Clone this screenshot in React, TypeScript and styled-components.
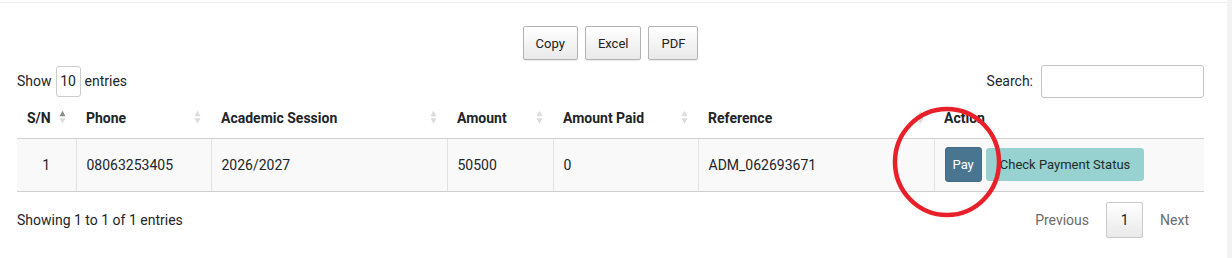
import React from "react";
import styled, { createGlobalStyle } from "styled-components";

const GlobalStyle = createGlobalStyle`
  html, body { margin: 0; padding: 0; background: #fff; }
  body { font-family: Roboto, "Liberation Sans", Arial, sans-serif; color: #212529; }
  * { box-sizing: border-box; }
`;

const Page = styled.div`
  width: 1232px;
  height: 258px;
  padding-top: 2px;
  border-right: 5px solid #f2f3f5;
  position: relative;
  overflow: hidden;
`;

const Card = styled.div`
  background: #fff;
  height: 256px;
  border-top: 1px solid #efefef;
  padding: 23px 23px 0 17px;
  display: flex;
  flex-direction: column;
`;

const Toolbar = styled.div`
  display: flex;
  justify-content: center;
  gap: 7px;
  height: 34px;
`;

const ExportButton = styled.button`
  height: 34px;
  padding: 0 12px;
  font-family: Roboto, "Liberation Sans", Arial, sans-serif;
  font-size: 13px;
  color: #222;
  border: 1px solid #b3b3b3;
  border-radius: 2px;
  background: linear-gradient(to bottom, #ffffff 0%, #e9e9e9 100%);
  box-shadow: 0 1px 1px rgba(0,0,0,0.08);
`;

const Controls = styled.div`
  display: flex;
  justify-content: space-between;
  align-items: center;
  margin-top: 5px;
  height: 32px;
  font-size: 14px;
`;

const Label = styled.label`
  display: flex;
  align-items: center;
  gap: 4px;
`;

const LengthBox = styled.span`
  display: inline-flex;
  align-items: center;
  justify-content: center;
  width: 25px;
  height: 31px;
  border: 1px solid #ccc;
  border-radius: 3px;
`;

const SearchBox = styled.span`
  display: inline-block;
  width: 163px;
  height: 33px;
  border: 1px solid #c4c4c4;
  border-radius: 3px;
  margin-left: 4px;
`;

const Table = styled.table`
  border-collapse: collapse;
  table-layout: fixed;
  width: 1187px;
  margin-top: 2px;
  font-size: 14px;
`;

const Th = styled.th<{ $w: number }>`
  width: ${(p) => p.$w}px;
  height: 39px;
  text-align: left;
  font-weight: 700;
  padding: 0 10px;
  position: relative;
  border-bottom: 1px solid #cfcfcf;
`;

const Td = styled.td<{ $center?: boolean }>`
  height: 53px;
  padding: 0 10px;
  background: #f9f9f9;
  border-left: 1px solid #e2e2e2;
  border-bottom: 1px solid #cfcfcf;
  text-align: ${(p) => (p.$center ? "center" : "left")};
  &:first-child { border-left: none; }
`;

const SortMark = styled.span`
  position: absolute;
  right: 10px;
  top: 50%;
  transform: translateY(-55%);
  display: flex;
`;

const Actions = styled.div`
  display: flex;
  gap: 4px;
  align-items: center;
`;

const PayButton = styled.button`
  height: 35px;
  padding: 0 7px;
  background: #4a7591;
  color: #fff;
  border: 1px solid #416a84;
  border-radius: 3px;
  font-family: Roboto, "Liberation Sans", Arial, sans-serif;
  font-size: 13px;
`;

const StatusButton = styled.button`
  height: 33px;
  padding: 0 13px;
  background: #97d2d0;
  color: #1d2b2b;
  border: 1px solid #97d2d0;
  border-radius: 3px;
  font-family: Roboto, "Liberation Sans", Arial, sans-serif;
  font-size: 13px;
`;

const Footer = styled.div`
  display: flex;
  justify-content: space-between;
  align-items: center;
  margin-top: 10px;
  font-size: 14px;
`;

const Pager = styled.div`
  display: flex;
  align-items: center;
  margin-right: -2px;
`;

const PageLink = styled.span`
  color: #6b6b6b;
  padding: 0 17px;
`;

const PageCurrent = styled.span`
  display: inline-flex;
  align-items: center;
  justify-content: center;
  width: 37px;
  height: 36px;
  border: 1px solid #c9c9c9;
  border-radius: 2px;
  background: linear-gradient(to bottom, #ffffff 0%, #e9e9e9 100%);
  color: #222;
`;

const Annotation = styled.svg`
  position: absolute;
  left: 890px;
  top: 104px;
  pointer-events: none;
`;

const Sort: React.FC<{ active?: boolean }> = ({ active }) => (
  <SortMark>
    <svg width="7" height="15" viewBox="0 0 7 15">
      <polygon points="3.5,1 6.5,6.5 0.5,6.5" fill={active ? "#8a8a8a" : "#dcdcdc"} />
      <polygon points="0.5,8.5 6.5,8.5 3.5,14" fill="#dcdcdc" />
    </svg>
  </SortMark>
);

const columns: { label: string; w: number; sort: boolean; active?: boolean }[] = [
  { label: "S/N", w: 59, sort: true, active: true },
  { label: "Phone", w: 135, sort: true },
  { label: "Academic Session", w: 236, sort: true },
  { label: "Amount", w: 106, sort: true },
  { label: "Amount Paid", w: 145, sort: true },
  { label: "Reference", w: 236, sort: true },
  { label: "Action", w: 270, sort: false },
];

export default function App() {
  return (
    <>
      <GlobalStyle />
      <Page>
        <Card>
          <Toolbar>
            <ExportButton>Copy</ExportButton>
            <ExportButton>Excel</ExportButton>
            <ExportButton>PDF</ExportButton>
          </Toolbar>
          <Controls>
            <Label>
              Show <LengthBox>10</LengthBox> entries
            </Label>
            <Label>
              Search: <SearchBox />
            </Label>
          </Controls>
          <Table>
            <thead>
              <tr>
                {columns.map((c) => (
                  <Th key={c.label} $w={c.w}>
                    {c.label}
                    {c.sort && <Sort active={c.active} />}
                  </Th>
                ))}
              </tr>
            </thead>
            <tbody>
              <tr>
                <Td $center>1</Td>
                <Td>08063253405</Td>
                <Td>2026/2027</Td>
                <Td>50500</Td>
                <Td>0</Td>
                <Td>ADM_062693671</Td>
                <Td>
                  <Actions>
                    <PayButton>Pay</PayButton>
                    <StatusButton>Check Payment Status</StatusButton>
                  </Actions>
                </Td>
              </tr>
            </tbody>
          </Table>
          <Footer>
            <span>Showing 1 to 1 of 1 entries</span>
            <Pager>
              <PageLink>Previous</PageLink>
              <PageCurrent>1</PageCurrent>
              <PageLink>Next</PageLink>
            </Pager>
          </Footer>
        </Card>
        <Annotation width="116" height="118" viewBox="0 0 116 118">
          <ellipse cx="57" cy="58" rx="52" ry="53" fill="none" stroke="#e8202a" strokeWidth="4.5" />
        </Annotation>
      </Page>
    </>
  );
}
